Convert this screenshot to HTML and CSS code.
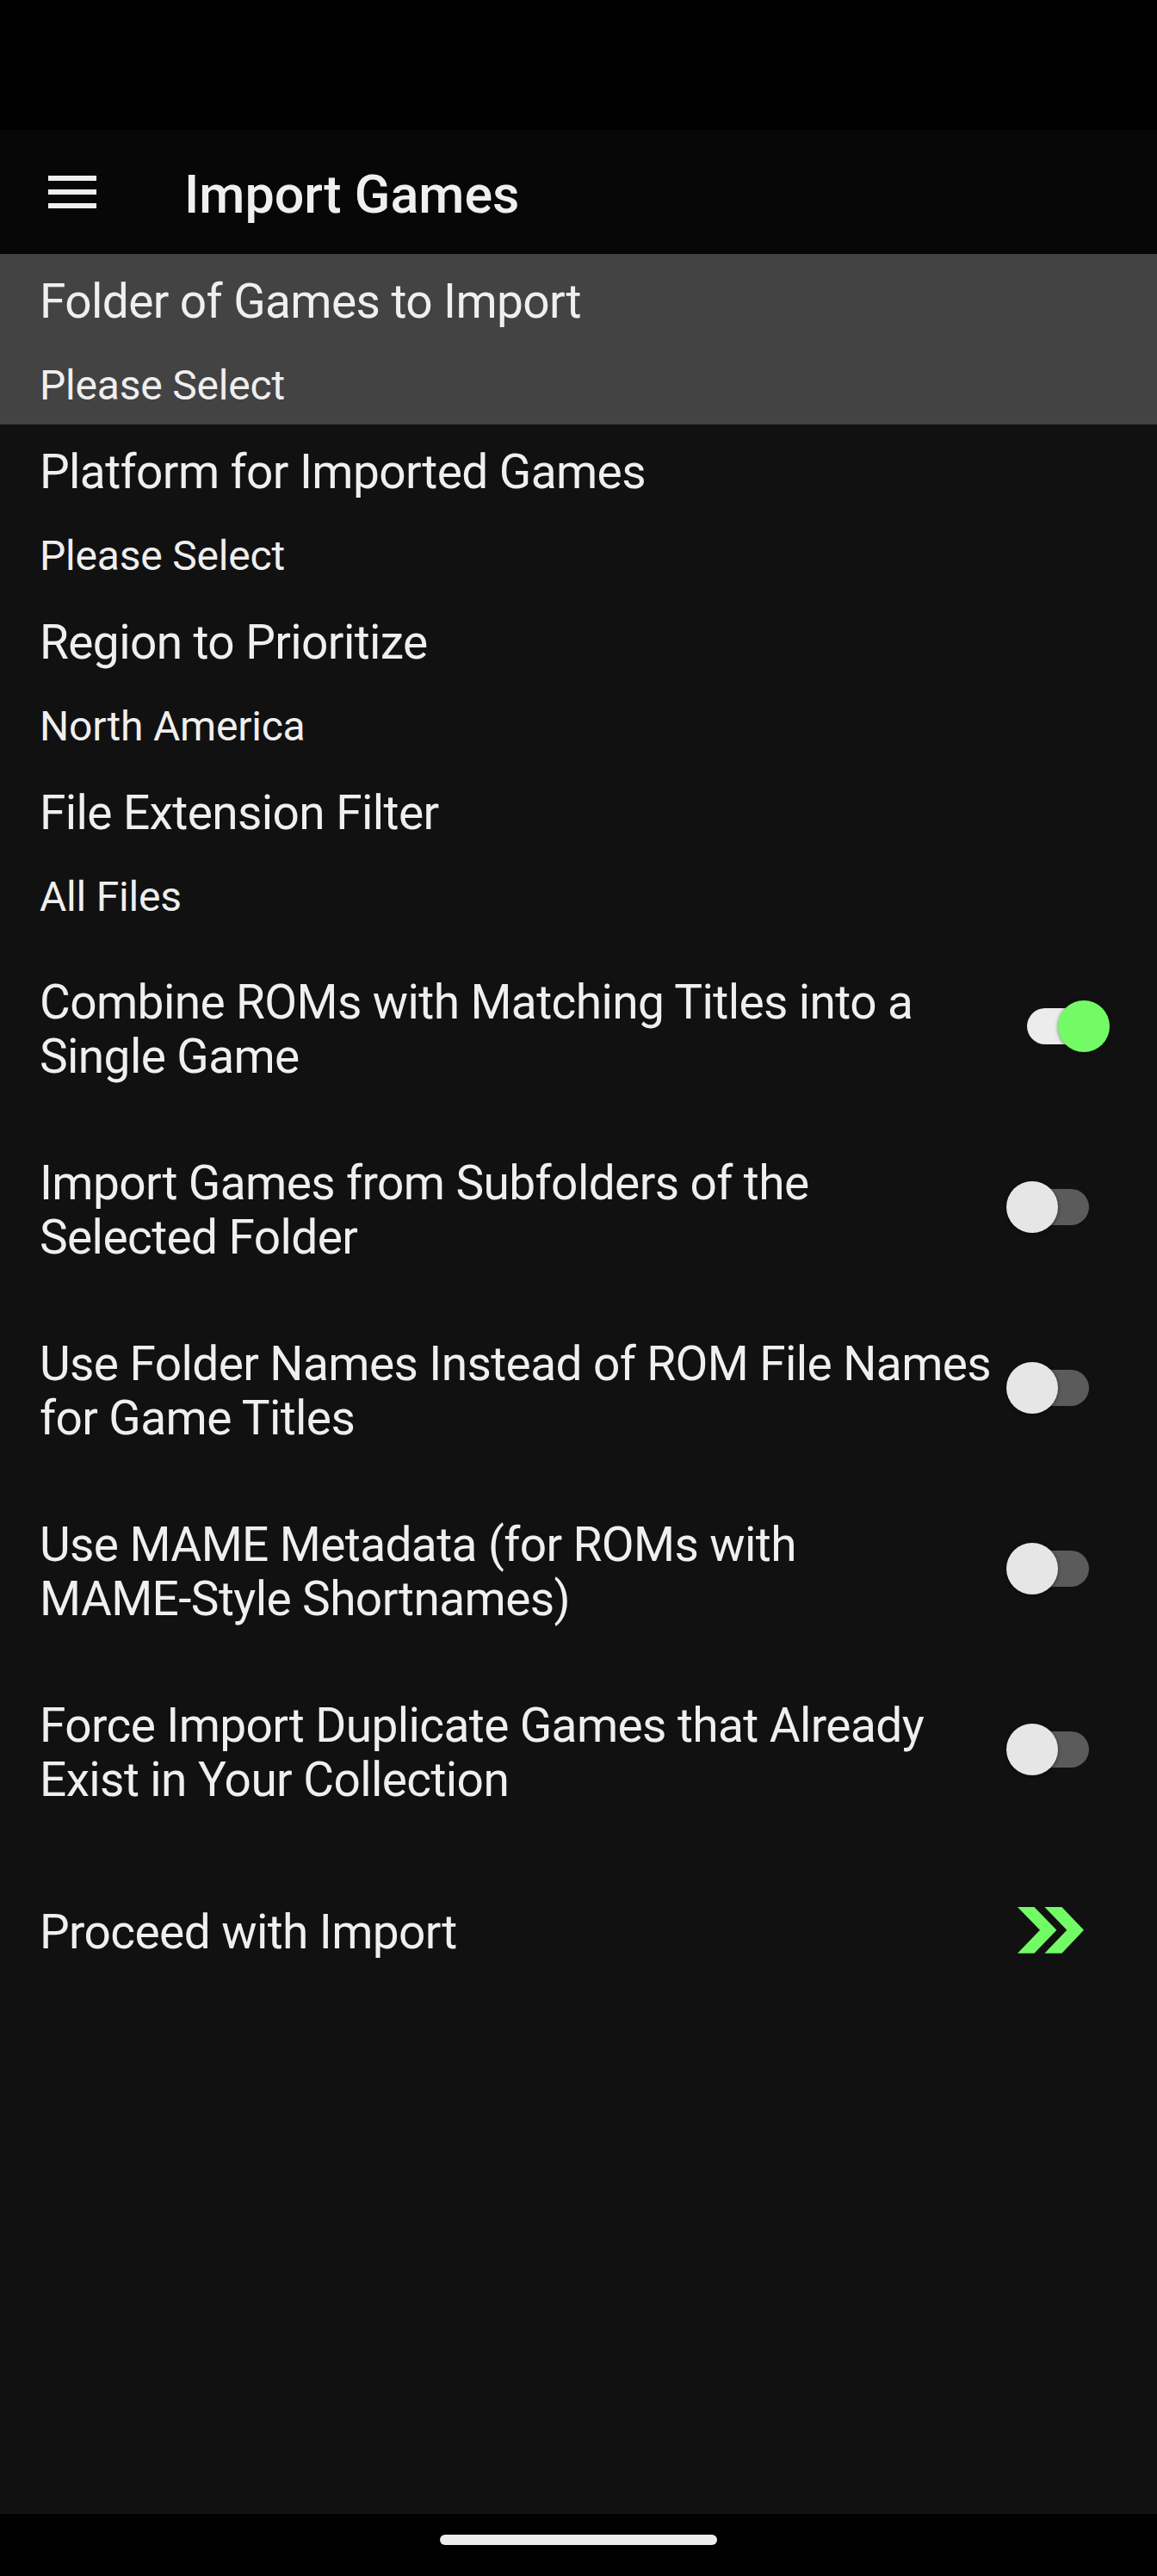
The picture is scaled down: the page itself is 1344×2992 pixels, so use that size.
FILE: index.html
```html
<!DOCTYPE html>
<html>
<head>
    <title>Import Games</title>
    <link rel="stylesheet" href="styles.css">
</head>
<body>
    <div class="status-bar"></div>
    <div class="app-bar">
        <div class="menu-button">
            <span></span>
            <span></span>
            <span></span>
        </div>
        <h1>Import Games</h1>
    </div>
    <div class="content">
        <!-- Selection rows -->
        <div class="pref-row selected">
            <div class="pref-title">Folder of Games to Import</div>
            <div class="pref-value">Please Select</div>
        </div>
        <div class="pref-row">
            <div class="pref-title">Platform for Imported Games</div>
            <div class="pref-value">Please Select</div>
        </div>
        <div class="pref-row">
            <div class="pref-title">Region to Prioritize</div>
            <div class="pref-value">North America</div>
        </div>
        <div class="pref-row">
            <div class="pref-title">File Extension Filter</div>
            <div class="pref-value">All Files</div>
        </div>

        <!-- Toggle rows -->
        <div class="toggle-row">
            <div class="toggle-label">Combine ROMs with Matching Titles into a Single Game</div>
            <div class="switch on"><span class="track"></span><span class="thumb"></span></div>
        </div>
        <div class="toggle-row">
            <div class="toggle-label">Import Games from Subfolders of the Selected Folder</div>
            <div class="switch"><span class="track"></span><span class="thumb"></span></div>
        </div>
        <div class="toggle-row">
            <div class="toggle-label">Use Folder Names Instead of ROM File Names for Game Titles</div>
            <div class="switch"><span class="track"></span><span class="thumb"></span></div>
        </div>
        <div class="toggle-row">
            <div class="toggle-label">Use MAME Metadata (for ROMs with <span class="nowrap">MAME-Style</span> Shortnames)</div>
            <div class="switch"><span class="track"></span><span class="thumb"></span></div>
        </div>
        <div class="toggle-row">
            <div class="toggle-label">Force Import Duplicate Games that Already Exist in Your Collection</div>
            <div class="switch"><span class="track"></span><span class="thumb"></span></div>
        </div>

        <div class="toggle-row proceed">
            <div class="toggle-label">Proceed with Import</div>
            <svg class="proceed-icon" width="77" height="54" viewBox="0 0 77 54">
                <polygon points="0,0 19.4,0 45.4,26.8 19.4,53.7 0,53.7 26,26.8" />
                <polygon points="31.4,0 51.4,0 77,26.8 51.4,53.7 31.4,53.7 57.3,26.8" />
            </svg>
        </div>
    </div>
    <div class="nav-bar">
        <div class="nav-pill"></div>
    </div>
</body>
</html>
```

FILE: styles.css
```css
body {
    margin: 0;
    font-family: Roboto, "Noto Sans", Arial, sans-serif;
    background-color: #111111;
    color: #efefef;
    height: 2992px;
    display: flex;
    flex-direction: column;
}
.status-bar {
    height: 151px;
    background-color: #000000;
}
.app-bar {
    height: 144px;
    background-color: #070707;
    display: flex;
    align-items: center;
}
.menu-button {
    width: 56px;
    margin-left: 56px;
    display: flex;
    flex-direction: column;
    gap: 10px;
}
.menu-button span {
    display: block;
    height: 6px;
    background-color: #efefef;
}
.app-bar h1 {
    margin: 0 0 0 102px;
    padding-top: 6px;
    font-size: 61px;
    font-weight: 500;
    line-height: 72px;
}
.content {
    flex: 1;
    background-color: #111111;
}
.pref-row {
    height: 198px;
    box-sizing: border-box;
    padding: 22px 42px 0 46px;
}
.pref-row.selected {
    background-color: #434343;
}
.pref-title {
    font-size: 55px;
    line-height: 66px;
    letter-spacing: -0.6px;
}
.pref-value {
    font-size: 48px;
    line-height: 56px;
    margin-top: 37px;
    letter-spacing: -0.2px;
}
.toggle-row {
    height: 210px;
    box-sizing: border-box;
    padding: 8px 0 0 46px;
    display: flex;
    align-items: center;
}
.toggle-label {
    flex: 1;
    font-size: 55px;
    line-height: 63px;
    letter-spacing: -0.6px;
    margin-right: 16px;
}
.nowrap {
    white-space: nowrap;
}
.switch {
    position: relative;
    width: 105px;
    height: 60px;
    margin-right: 70px;
    margin-top: -8px;
}
.switch .track {
    position: absolute;
    left: 9px;
    top: 9px;
    width: 87px;
    height: 42px;
    border-radius: 21px;
    background-color: #5b5b5b;
}
.switch .thumb {
    position: absolute;
    left: 0;
    top: 0;
    width: 60px;
    height: 60px;
    border-radius: 50%;
    background-color: #e6e6e6;
    box-shadow: 0 1px 4px rgba(0, 0, 0, 0.5);
}
.switch.on {
    margin-right: 55px;
}
.switch.on .track {
    background-color: #ececec;
}
.switch.on .thumb {
    left: 45px;
    background-color: #72fb65;
}
.proceed {
    padding-top: 4px;
}
.proceed-icon {
    fill: #72fb65;
    margin-right: 85px;
    margin-top: -4px;
}
.nav-bar {
    height: 72px;
    background-color: #000000;
    display: flex;
    justify-content: center;
    align-items: center;
}
.nav-pill {
    width: 322px;
    height: 12px;
    border-radius: 6px;
    background-color: #ececec;
    margin-top: -12px;
}
```
